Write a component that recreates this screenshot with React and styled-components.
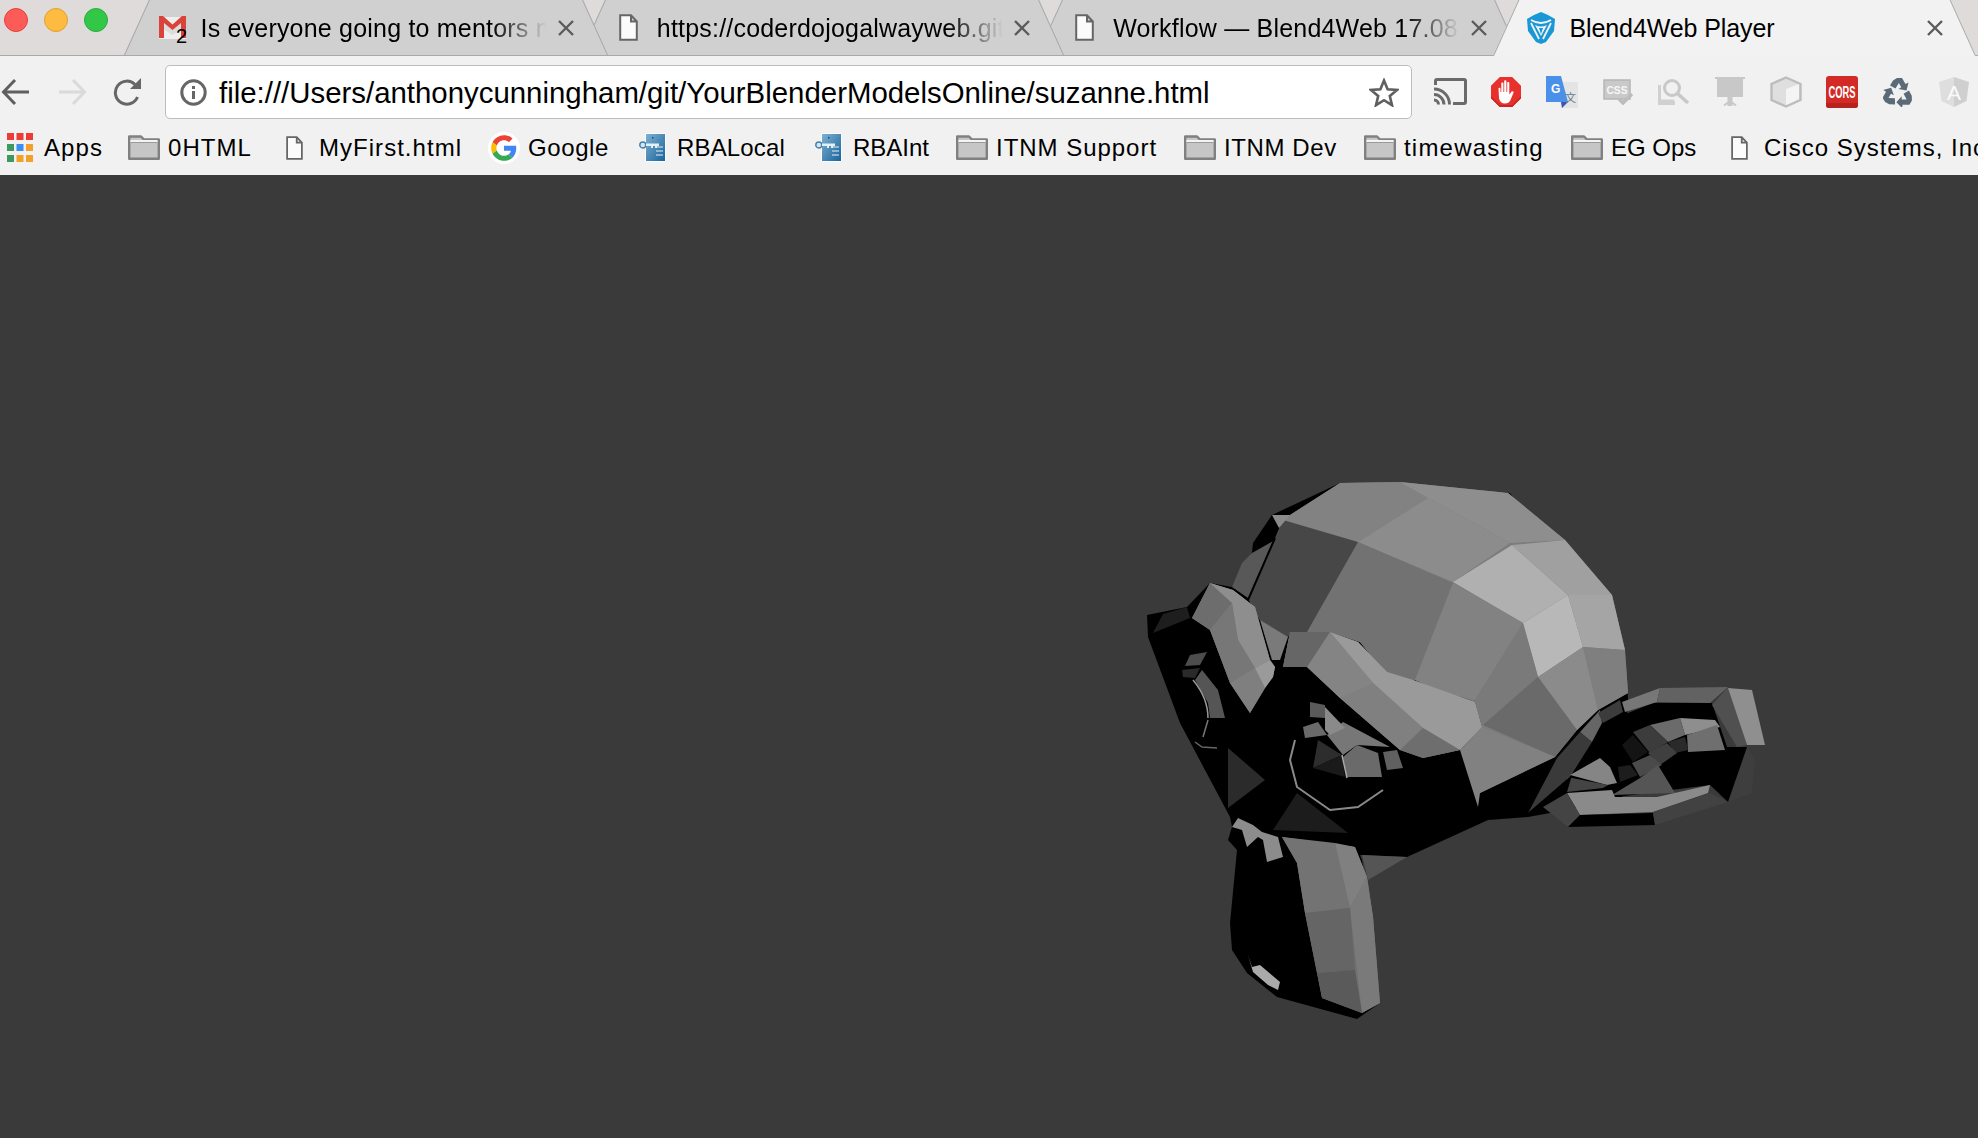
import React from "react";
import styled, { createGlobalStyle } from "styled-components";

const GlobalStyle = createGlobalStyle`
  html, body {
    margin: 0;
    padding: 0;
    height: 100%;
    overflow: hidden;
    background: #3a3a3a;
  }
  * {
    box-sizing: border-box;
  }
`;

const Page = styled.div`
  width: 1978px;
  height: 1138px;
  display: flex;
  flex-direction: column;
  overflow: hidden;
  font-family: "Liberation Sans", Arial, sans-serif;
  color: #000;
`;

const TabStrip = styled.div`
  height: 56px;
  flex: none;
  display: flex;
  align-items: flex-start;
  background: #dedbda;
  border-bottom: 1px solid #a9a9a9;
`;

const WindowButtons = styled.div`
  width: 150.7px;
  flex: none;
  height: 40px;
  padding-left: 4px;
  display: flex;
  align-items: center;
  gap: 16px;
`;

const Light = styled.span`
  width: 24px;
  height: 24px;
  border-radius: 50%;
  background: ${(p) => p.$color};
  border: 1px solid ${(p) => p.$edge};
`;

const Tab = styled.div`
  position: relative;
  z-index: ${(p) => p.$z};
  width: 483px;
  height: ${(p) => (p.$active ? "56px" : "55px")};
  margin-left: -26.7px;
  padding: 0 30px;
  flex: none;
  display: flex;
  align-items: center;
  &::before,
  &::after {
    content: "";
    position: absolute;
    z-index: -1;
    top: 0;
    bottom: 0;
    width: 50%;
    background: ${(p) => (p.$active ? "#f2f2f2" : "#d0d0d0")};
  }
  &::before {
    left: 0;
    border-left: 1px solid #a5a5a5;
    transform-origin: bottom left;
    transform: skewX(-24.4deg);
  }
  &::after {
    right: 0;
    border-right: 1px solid #a5a5a5;
    transform-origin: bottom right;
    transform: skewX(24.4deg);
  }
`;

const TabIcon = styled.span`
  width: 36px;
  height: 36px;
  flex: none;
  margin-right: 10.5px;
  position: relative;
  display: flex;
  align-items: center;
  justify-content: center;
`;

const Badge = styled.span`
  position: absolute;
  left: 22px;
  top: 15px;
  font-size: 20px;
  line-height: 22px;
`;

const TabTitle = styled.span`
  flex: 1;
  min-width: 0;
  margin-right: 8px;
  overflow: hidden;
  white-space: nowrap;
  font-size: 25px;
  line-height: 32px;
  letter-spacing: ${(p) => (p.$fade ? "0.2px" : "-0.1px")};
  ${(p) =>
    p.$fade &&
    `
    -webkit-mask-image: linear-gradient(to right, #000 84%, transparent 100%);
    mask-image: linear-gradient(to right, #000 84%, transparent 100%);
  `}
`;

const Toolbar = styled.div`
  height: 63px;
  flex: none;
  padding-top: 9px;
  display: flex;
  align-items: flex-start;
  background: #f1f1f1;
`;

const NavButton = styled.span`
  width: 56px;
  height: 53px;
  flex: none;
  display: flex;
  align-items: center;
  justify-content: center;
  &:first-child {
    margin-left: -12px;
  }
`;

const UrlBar = styled.div`
  width: 1247px;
  height: 54px;
  margin: 0 10px 0 9px;
  padding: 0 12px 0 14px;
  flex: none;
  display: flex;
  align-items: center;
  background: #fff;
  border: 1px solid #bdbdbd;
  border-radius: 5px;
`;

const UrlText = styled.span`
  flex: 1;
  margin-left: 12px;
  padding-top: 1px;
  font-size: 29.4px;
  white-space: nowrap;
`;

const ExtButton = styled.span`
  width: 56px;
  height: 53px;
  flex: none;
  display: flex;
  align-items: center;
  justify-content: center;
`;

const Bookmarks = styled.div`
  height: 56px;
  flex: none;
  padding: 1px 0 0 4px;
  display: flex;
  align-items: center;
  background: #f1f1f1;
  overflow: hidden;
`;

const Bookmark = styled.div`
  width: ${(p) => (p.$width ? `${p.$width}px` : "auto")};
  flex: none;
  display: flex;
  align-items: center;
  gap: 9px;
  font-size: 24px;
  letter-spacing: ${(p) => p.$track}px;
  white-space: nowrap;
`;

const BookmarkIcon = styled.span`
  width: 31px;
  height: 32px;
  flex: none;
  display: flex;
  align-items: center;
  justify-content: center;
`;

const Viewport = styled.main`
  flex: 1;
  min-height: 0;
  padding: 295px 0 0 1130px;
  background: #3a3a3a;
`;

const Model = styled.svg`
  display: block;
  filter: blur(0.7px);
`;

const Close = () => (
  <svg width="22" height="22" viewBox="0 0 22 22" style={{ flex: "none" }}>
    <path d="M4 4 18 18M18 4 4 18" stroke="#5c5c5c" strokeWidth="2.4" />
  </svg>
);

const FileIcon = ({ w = 19, h = 27 }) => (
  <svg width={w} height={h} viewBox="0 0 19 27">
    <path
      d="M1.2 1.2H12L17.8 7.5V25.8H1.2Z M12 1.2V7.5H17.8"
      fill="#fbfbfb"
      stroke="#666"
      strokeWidth="2"
    />
  </svg>
);

const GmailIcon = () => (
  <svg width="27" height="27" viewBox="0 0 27 27">
    <path d="M0 3H27V25H0Z" fill="#eee" />
    <path d="M3 5 13.5 14 24 5V14L13.5 21 3 14Z" fill="#dcdcdc" />
    <path d="M0 2H4L13.5 10.5 23 2H27V24H22V9L13.5 16 5 9V24H0Z" fill="#d9433a" />
  </svg>
);

const BlendLogo = () => (
  <svg width="30" height="32" viewBox="0 0 30 32">
    <path d="M15 0 22 3 29 7 28 19 20 30 15 32 10 30 2 19 1 7 8 3Z" fill="#1a97d5" />
    <path d="M5 8Q15 14 25 8" fill="none" stroke="#f2f2f2" strokeWidth="2" />
    <path d="M5 11 13 27M25 11 17 27" fill="none" stroke="#f2f2f2" strokeWidth="1.8" />
    <path d="M9 13Q15 16 21 13L15 24Z" fill="#f2f2f2" />
    <path d="M13 16H17L15 22Z" fill="#1a97d5" />
  </svg>
);

const BackIcon = ({ color = "#5f5f5f" }) => (
  <svg width="30" height="28" viewBox="0 0 30 28">
    <path d="M28 14H3M14 2 2.5 14 14 26" fill="none" stroke={color} strokeWidth="3" />
  </svg>
);

const ForwardIcon = ({ color = "#dadada" }) => (
  <svg width="30" height="28" viewBox="0 0 30 28">
    <path d="M2 14H27M16 2 27.5 14 16 26" fill="none" stroke={color} strokeWidth="3" />
  </svg>
);

const ReloadIcon = () => (
  <svg width="30" height="30" viewBox="0 0 30 30">
    <path d="M24.5 20A11.5 11.5 0 1 1 22 7.5" fill="none" stroke="#666" strokeWidth="3" />
    <path d="M17 12H28V1Z" fill="#666" />
  </svg>
);

const InfoIcon = () => (
  <svg width="27" height="27" viewBox="0 0 27 27" style={{ flex: "none" }}>
    <circle cx="13.5" cy="13.5" r="11.7" fill="none" stroke="#666" strokeWidth="3" />
    <path d="M12 7h3v3h-3ZM12 12h3v8h-3Z" fill="#666" />
  </svg>
);

const StarIcon = () => (
  <svg width="30" height="29" viewBox="0 0 30 29" style={{ flex: "none" }}>
    <path
      d="M15 2.5 18.6 11.3 28 12 20.8 18 23 27.2 15 22.2 7 27.2 9.2 18 2 12 11.4 11.3Z"
      fill="none"
      stroke="#5f5f5f"
      strokeWidth="2.6"
    />
  </svg>
);

const CastIcon = () => (
  <svg width="33" height="27" viewBox="0 0 33 27">
    <path d="M1.5 7V3Q1.5 1.5 3 1.5H30Q31.5 1.5 31.5 3V24Q31.5 25.5 30 25.5H19" fill="none" stroke="#6a6a6a" strokeWidth="3" />
    <path
      d="M0 11C8.5 11 15.5 18 15.5 26.5M0 16.5C5.5 16.5 10 21 10 26.5M0 22C2.5 22 4.5 24 4.5 26.5"
      fill="none"
      stroke="#6a6a6a"
      strokeWidth="3"
    />
  </svg>
);

const AdblockIcon = () => (
  <svg width="30" height="30" viewBox="0 0 30 30">
    <path d="M8.8 0H21.2L30 8.8V21.2L21.2 30H8.8L0 21.2V8.8Z" fill="#e8312c" />
    <path d="M0 21.2 8.8 30H21.2L30 21.2V19L21 28H9L0 19Z" fill="#c92522" />
    <path
      d="M7.5 11.5C7.5 10.5 9.5 10.5 9.5 11.5V15H10.3V6.5C10.3 5.3 12.4 5.3 12.4 6.5V15H13.2V4.2C13.2 3 15.4 3 15.4 4.2V15H16.2V6C16.2 4.8 18.3 4.8 18.3 6V17.5L20.6 14.6C21.5 13.6 23.2 14.5 22.5 15.8L19.5 23C18.5 25.5 16.5 26.5 14 26.5C10.5 26.5 8.5 24.5 8 21Z"
      fill="#fff"
    />
  </svg>
);

const TranslateIcon = () => (
  <svg width="32" height="32" viewBox="0 0 32 32">
    <path d="M12 6H32V32H15Z" fill="#e4e4e4" />
    <path d="M0 0H15L22 26H0Z" fill="#4a90e8" />
    <path d="M15 26H22L16 32Z" fill="#3f51b5" />
    <text x="5" y="17" fontSize="12" fontWeight="700" fill="#fff" fontFamily="Liberation Sans, sans-serif">G</text>
    <text x="19" y="26" fontSize="11" fill="#60798a" fontFamily="Noto Sans CJK SC, sans-serif">文</text>
  </svg>
);

const CssIcon = () => (
  <svg width="30" height="26" viewBox="0 0 30 26">
    <path d="M1 1H27V20H1Z" fill="#c9c9c9" stroke="#b5b5b5" strokeWidth="1.5" />
    <text x="14" y="15" fontSize="11" fontWeight="700" fill="#f7f7f7" textAnchor="middle" textLength="21" lengthAdjust="spacingAndGlyphs" fontFamily="Liberation Sans, sans-serif">CSS</text>
    <path d="M16 20 20 24 29 15" fill="none" stroke="#bcbcbc" strokeWidth="3.5" />
  </svg>
);

const InspectIcon = () => (
  <svg width="32" height="26" viewBox="0 0 32 26">
    <path d="M1.5 6V22H16" fill="none" stroke="#d0d0d0" strokeWidth="3" />
    <path d="M0 22H17V26H0Z" fill="#d0d0d0" />
    <circle cx="14" cy="9" r="7.5" fill="none" stroke="#c8c8c8" strokeWidth="3" />
    <path d="M19.5 14.5 30 24" stroke="#c8c8c8" strokeWidth="3.6" />
  </svg>
);

const ScreenIcon = () => (
  <svg width="30" height="29" viewBox="0 0 30 29">
    <path d="M0 0H30V2H28V20H2V2H0Z" fill="#c8c8c8" />
    <path d="M13.5 20H16.5V29H13.5ZM15 24 9 28.5M15 24 21 28.5" fill="#c8c8c8" stroke="#c8c8c8" strokeWidth="2" />
  </svg>
);

const CubeIcon = () => (
  <svg width="32" height="32" viewBox="0 0 32 32">
    <path d="M16 1.5 30.5 8V24L16 30.5 1.5 24V8Z" fill="#dfdfdf" stroke="#bdbdbd" strokeWidth="2.4" />
    <path d="M16 29V13L29 8V23Z" fill="#f4f4f4" />
  </svg>
);

const CorsIcon = () => (
  <svg width="32" height="32" viewBox="0 0 32 32">
    <rect width="32" height="32" rx="3" fill="#d42a26" />
    <path d="M0 27H32V29Q32 32 29 32H3Q0 32 0 29Z" fill="#b52220" />
    <text x="16" y="22" fontSize="16" fontWeight="700" fill="#fff" textAnchor="middle" textLength="27" lengthAdjust="spacingAndGlyphs" fontFamily="Liberation Sans, sans-serif">CORS</text>
  </svg>
);

// three bent arrows chasing each other round the centre
const RecycleIcon = () => (
  <svg width="30" height="30" viewBox="0 0 30 30">
    {[0, 120, 240].map((angle) => (
      <path
        key={angle}
        transform={`rotate(${angle} 15 16.5)`}
        d="M10 3.5 14 1H19L22.5 7 25.5 5.5 23.5 13.5 15.5 12 18.3 10.3 15.8 6 12.5 11.5 7 8.5Z"
        fill="#5a6a76"
      />
    ))}
  </svg>
);

const AngularIcon = () => (
  <svg width="30" height="30" viewBox="0 0 30 30">
    <path d="M15 0 30 5 27.5 24 15 30Z" fill="#cfcfcf" />
    <path d="M15 0 0 5 2.5 24 15 30Z" fill="#dedede" />
    <text x="15" y="23" fontSize="21" fill="#fafafa" textAnchor="middle" fontFamily="Liberation Sans, sans-serif">A</text>
  </svg>
);

const AppsIcon = () => {
  const colors = ["#ef3b36", "#ef3b36", "#ef3b36", "#3c9a5f", "#3f8cf2", "#f2a02a", "#3c9a5f", "#f2a02a", "#f2a02a"];
  return (
    <svg width="26" height="30" viewBox="0 0 26 30">
      {colors.map((c, i) => (
        <rect key={i} x={(i % 3) * 9.5} y={Math.floor(i / 3) * 11} width="7" height="7" fill={c} />
      ))}
    </svg>
  );
};

const FolderIcon = () => (
  <svg width="32" height="25" viewBox="0 0 32 25" style={{ flex: "none" }}>
    <path d="M1.2 23.8V1.5H13L16 4.5H30.8V23.8Z" fill="#c6c6c6" stroke="#808080" strokeWidth="2.4" strokeLinejoin="round" />
    <path d="M2.4 5H29.6V7.5H2.4Z" fill="#f4f4f4" />
    <path d="M2.4 7.5H29.6" stroke="#9a9a9a" strokeWidth="1" />
  </svg>
);

const GoogleIcon = () => (
  <svg width="32" height="32" viewBox="-6 -6 60 60" style={{ flex: "none" }}>
    <circle cx="24" cy="24" r="30" fill="#fff" />
    <path fill="#EA4335" d="M24 9.5c3.54 0 6.71 1.22 9.21 3.6l6.85-6.85C35.9 2.38 30.47 0 24 0 14.62 0 6.51 5.38 2.56 13.22l7.98 6.19C12.43 13.72 17.74 9.5 24 9.5z" />
    <path fill="#4285F4" d="M46.98 24.55c0-1.57-.15-3.09-.38-4.55H24v9.02h12.94c-.58 2.96-2.26 5.48-4.78 7.18l7.73 6c4.51-4.18 7.09-10.36 7.09-17.65z" />
    <path fill="#FBBC05" d="M10.53 28.59c-.48-1.45-.76-2.99-.76-4.59s.27-3.14.76-4.59l-7.98-6.19C.92 16.46 0 20.12 0 24c0 3.88.92 7.54 2.56 10.78l7.97-6.19z" />
    <path fill="#34A853" d="M24 48c6.48 0 11.93-2.13 15.89-5.81l-7.73-6c-2.15 1.45-4.92 2.3-8.16 2.3-6.26 0-11.57-4.22-13.47-9.91l-7.98 6.19C6.51 42.62 14.62 48 24 48z" />
  </svg>
);

const KeyDocIcon = ({ id }) => (
  <svg width="27" height="29" viewBox="0 0 27 29">
    <defs>
      <linearGradient id={id} x1="0" y1="0" x2="1" y2="1">
        <stop offset="0" stopColor="#7fb0d2" />
        <stop offset="1" stopColor="#17649b" />
      </linearGradient>
    </defs>
    <path d="M6 0H27V29H6Z" fill="#fbfbfb" />
    <path d="M7 1H26V28H7Z" fill={`url(#${id})`} />
    <path d="M17 14H24M17 18H24M17 22H24" stroke="#e4f0f8" strokeWidth="1" />
    <path d="M13 4h1.5v1.5H13Z" fill="#0f4f80" />
    <circle cx="3.8" cy="12" r="3" fill="#d5e6f2" stroke="#3f80ad" strokeWidth="1.4" />
    <path d="M7 10.5H20V13H18V15H16V13H14V15H12V13H7Z" fill="#e4f0f8" />
  </svg>
);

const bookmarks = [
  { label: "Apps", icon: <AppsIcon />, width: 124, track: 1.07 },
  { label: "0HTML", icon: <FolderIcon />, width: 151, track: 1.06 },
  { label: "MyFirst.html", icon: <FileIcon w={17} h={24} />, width: 209, track: 1.03 },
  { label: "Google", icon: <GoogleIcon />, width: 149, track: 0.6 },
  { label: "RBALocal", icon: <KeyDocIcon id="key-local" />, width: 176, track: 0.15 },
  { label: "RBAInt", icon: <KeyDocIcon id="key-int" />, width: 143, track: 0 },
  { label: "ITNM Support", icon: <FolderIcon />, width: 228, track: 0.97 },
  { label: "ITNM Dev", icon: <FolderIcon />, width: 180, track: 0.6 },
  { label: "timewasting", icon: <FolderIcon />, width: 207, track: 1.2 },
  { label: "EG Ops", icon: <FolderIcon />, width: 153, track: 0 },
  { label: "Cisco Systems, Inc", icon: <FileIcon w={17} h={24} />, track: 1 },
];

const extensions = [
  <CastIcon />,
  <AdblockIcon />,
  <TranslateIcon />,
  <CssIcon />,
  <InspectIcon />,
  <ScreenIcon />,
  <CubeIcon />,
  <CorsIcon />,
  <RecycleIcon />,
  <AngularIcon />,
];

// suzanne, flat shaded faces back to front: [fill, points]
const faces = [
  ["#000", "1147,615 1187,607 1210,583 1232,587 1252,553 1272,515 1340,483 1510,493 1625,650 1628,700 1622,800 1528,817 1488,820 1407,857 1360,855 1362,860 1380,1003 1357,1019 1277,997 1247,973 1232,950 1230,923 1237,850 1228,840 1232,827 1230,817 1180,723 1148,637"],
  // backing so no black shows between neighbouring faces
  ["#7c7c7c", "1283,520 1290,515 1340,483 1400,482 1508,493 1565,540 1612,595 1625,650 1628,693 1598,710 1577,730 1555,757 1480,793 1462,750 1482,727 1475,702 1415,680 1393,683 1360,642 1330,632 1290,632 1288,637 1260,620 1248,598"],
  ["#828282", "1283,520 1290,515 1340,483 1400,482 1428,498 1358,542"],
  ["#8e8e8e", "1400,482 1508,493 1565,540 1510,543 1428,498"],
  ["#8c8c8c", "1358,542 1428,498 1510,543 1453,582"],
  ["#b0b0b0", "1453,582 1512,545 1568,595 1523,623"],
  ["#b8b8b8", "1523,623 1568,595 1583,647 1538,677"],
  ["#a0a0a0", "1512,545 1565,540 1612,595 1568,595"],
  ["#a5a5a5", "1568,595 1612,595 1625,650 1583,647"],
  ["#8b8b8b", "1538,677 1583,647 1598,710 1577,730"],
  ["#7f7f7f", "1583,647 1625,650 1628,693 1598,710"],
  ["#727272", "1358,542 1453,583 1415,680 1393,683 1360,642 1330,632 1307,632"],
  ["#474747", "1283,520 1358,542 1307,632 1290,632 1288,637 1260,620 1248,598"],
  ["#828282", "1453,583 1523,623 1475,700 1440,692 1415,680"],
  ["#7a7a7a", "1523,623 1538,677 1483,725 1475,700"],
  ["#6a6a6a", "1538,677 1577,730 1555,757 1483,725"],
  ["#818181", "1460,750 1482,727 1555,757 1480,793 1478,807"],
  // right brow
  ["#848484", "1290,632 1330,632 1358,642 1387,672 1413,680 1475,702 1482,727 1460,750 1423,758 1400,750 1340,698 1307,667 1283,667"],
  ["#9a9a9a", "1330,632 1358,642 1387,672 1413,680 1475,702 1482,727 1460,750 1423,728 1373,683"],
  ["#848484", "1330,632 1307,667 1340,698 1373,683"],
  ["#666666", "1290,632 1330,632 1307,667 1283,667"],
  ["#808080", "1373,683 1423,728 1400,750 1340,698"],
  ["#6e6e6e", "1423,728 1460,750 1423,758 1400,750"],
  // neck and chin
  ["#555555", "1362,855 1407,857 1368,880"],
  ["#707070", "1282,837 1355,847 1367,877 1373,917 1380,1003 1362,1013 1322,998 1317,973 1305,913 1297,863"],
  ["#737373", "1282,837 1335,843 1350,908 1305,913 1297,863"],
  ["#808080", "1335,843 1355,847 1367,877 1350,908"],
  ["#7a7a7a", "1367,877 1373,917 1380,1003 1362,1013 1350,908"],
  ["#656565", "1305,913 1350,908 1355,970 1317,973"],
  ["#5a5a5a", "1317,973 1355,970 1362,1013 1322,998"],
  ["#8c8c8c", "1232,827 1238,818 1253,825 1262,832 1278,837 1283,857 1267,862 1263,840 1258,837 1247,847 1242,830"],
  ["#aaaaaa", "1248,955 1252,967 1260,965 1280,982 1278,990 1268,985 1253,972"],
  // left ear and brow
  ["#1e1e1e", "1153,633 1163,614 1187,607 1190,618"],
  ["#7a7a7a", "1210,583 1233,590 1255,607 1270,660 1275,667 1273,677 1265,688 1250,713 1230,683 1210,630 1192,618"],
  ["#6d6d6d", "1210,583 1232,603 1210,630 1192,618"],
  ["#8e8e8e", "1210,583 1233,590 1255,607 1270,660 1255,668 1238,640 1232,603"],
  ["#777777", "1210,630 1232,603 1238,640 1255,668 1230,683"],
  ["#7f7f7f", "1230,683 1255,668 1265,688 1250,713"],
  ["#9a9a9a", "1255,668 1270,660 1275,667 1273,677 1265,688"],
  ["#7a7a7a", "1260,620 1288,637 1280,660 1272,660"],
  ["#000", "1272,515 1279,528 1275,538 1252,553 1253,543"],
  ["#585858", "1252,553 1275,540 1248,598 1232,587 1242,563"],
  ["#8a8a8a", "1272,515 1290,515 1279,528"],
  // left eye
  ["#4d4d4d", "1190,655 1207,652 1200,665 1185,666"],
  ["#2a2a2a", "1182,670 1200,668 1195,678 1183,677"],
  ["#555555", "1202,670 1218,690 1225,718 1210,718 1208,703 1195,680"],
  ["#2b2b2b", "1228,748 1265,780 1228,808"],
  ["#1c1c1c", "1297,793 1348,833 1273,830"],
  // right eye
  ["#2d2d2d", "1313,768 1318,740 1342,755"],
  ["#1a1a1a", "1313,768 1342,755 1345,777"],
  ["#6a6a6a", "1343,757 1357,745 1378,753 1382,777 1347,777"],
  ["#777777", "1327,735 1343,722 1390,747 1357,745 1343,755"],
  ["#8a8a8a", "1325,707 1345,728 1330,735 1325,730"],
  ["#5a5a5a", "1310,702 1325,705 1325,718 1310,717"],
  ["#6a6a6a", "1303,727 1318,722 1327,735 1305,738"],
  ["#606060", "1383,752 1397,750 1403,768 1387,770"],
  // right ear
  ["#3e3e3e", "1728,802 1747,747 1755,760 1752,793"],
  ["#000", "1572,775 1603,723 1653,703 1712,703 1727,747 1747,747 1728,802 1710,785 1617,797 1567,793"],
  ["#777777", "1622,702 1660,688 1657,702 1625,712"],
  ["#626262", "1660,688 1728,687 1710,703 1657,702"],
  ["#505050", "1728,687 1712,705 1737,747 1747,745"],
  ["#8f8f8f", "1728,688 1752,690 1765,745 1747,745"],
  ["#3a3a3a", "1557,758 1580,732 1592,742 1570,777 1528,813"],
  ["#666666", "1580,732 1600,710 1602,723 1592,742"],
  ["#3c3c3c", "1598,713 1620,700 1623,712 1603,723"],
  ["#6b6b6b", "1650,725 1680,718 1685,735 1668,742"],
  ["#8e8e8e", "1680,718 1715,720 1720,727 1685,735"],
  ["#6f6f6f", "1687,735 1717,725 1725,750 1688,752"],
  ["#2a2a2a", "1668,742 1685,737 1688,750 1675,753"],
  ["#3c3c3c", "1633,732 1650,725 1668,742 1650,753"],
  ["#141414", "1622,745 1633,735 1648,752 1633,762"],
  ["#3f3f3f", "1648,753 1667,743 1677,753 1660,765"],
  ["#4a4a4a", "1632,763 1650,755 1662,765 1640,777"],
  ["#1d1d1d", "1618,767 1630,765 1638,775 1620,782"],
  ["#555555", "1612,795 1640,778 1658,765 1675,793"],
  ["#858585", "1570,775 1600,758 1610,767 1617,783 1607,785"],
  ["#444444", "1567,777 1608,785 1603,788 1567,792"],
  ["#8a8a8a", "1567,793 1612,790 1615,797 1657,797 1710,785 1708,793 1653,812 1580,815"],
  ["#444444", "1567,793 1580,815 1568,827 1543,807"],
  ["#000", "1580,815 1653,813 1655,825 1568,827"],
  ["#424242", "1653,812 1710,793 1728,802 1655,825"],
  ["#000", "1528,813 1572,775 1567,792 1540,807"],
];

const strokes = [
  ["#000", 2, "M1275 538 1248 600"],
  ["#999", 1.5, "M1193 680Q1208 698 1208 718"],
  ["#777", 1.5, "M1208 720 1203 737"],
  ["#666", 1.5, "M1195 742 1202 747 1217 748"],
  ["#8a8a8a", 2, "M1295 740 1290 760 1297 787 1330 810 1358 807 1383 790"],
  ["#aaa", 1.5, "M1342 755 1347 778"],
];

const Suzanne = () => (
  <Model width="650" height="560" viewBox="1130 470 650 560">
    {faces.map(([fill, points], i) => (
      <polygon key={i} fill={fill} points={points} />
    ))}
    {strokes.map(([color, width, d], i) => (
      <path key={i} d={d} fill="none" stroke={color} strokeWidth={width} />
    ))}
  </Model>
);

const App = () => {
  return (
    <Page>
      <GlobalStyle />
      <TabStrip>
        <WindowButtons>
          <Light $color="#fc5b57" $edge="#e3433e" />
          <Light $color="#fdbc40" $edge="#e0a02f" />
          <Light $color="#33c748" $edge="#2aac3b" />
        </WindowButtons>
        <Tab $z={3}>
          <TabIcon>
            <GmailIcon />
            <Badge>2</Badge>
          </TabIcon>
          <TabTitle $fade>Is everyone going to mentors now</TabTitle>
          <Close />
        </Tab>
        <Tab $z={2}>
          <TabIcon>
            <FileIcon />
          </TabIcon>
          <TabTitle $fade>https://coderdojogalwayweb.github.io</TabTitle>
          <Close />
        </Tab>
        <Tab $z={1}>
          <TabIcon>
            <FileIcon />
          </TabIcon>
          <TabTitle $fade>Workflow — Blend4Web 17.08 Manual</TabTitle>
          <Close />
        </Tab>
        <Tab $z={4} $active>
          <TabIcon>
            <BlendLogo />
          </TabIcon>
          <TabTitle>Blend4Web Player</TabTitle>
          <Close />
        </Tab>
      </TabStrip>
      <Toolbar>
        <NavButton>
          <BackIcon />
        </NavButton>
        <NavButton>
          <ForwardIcon />
        </NavButton>
        <NavButton>
          <ReloadIcon />
        </NavButton>
        <UrlBar>
          <InfoIcon />
          <UrlText>file:///Users/anthonycunningham/git/YourBlenderModelsOnline/suzanne.html</UrlText>
          <StarIcon />
        </UrlBar>
        {extensions.map((icon, i) => (
          <ExtButton key={i}>{icon}</ExtButton>
        ))}
      </Toolbar>
      <Bookmarks>
        {bookmarks.map((b) => (
          <Bookmark key={b.label} $width={b.width} $track={b.track}>
            <BookmarkIcon>{b.icon}</BookmarkIcon>
            {b.label}
          </Bookmark>
        ))}
      </Bookmarks>
      <Viewport>
        <Suzanne />
      </Viewport>
    </Page>
  );
};

export default App;
